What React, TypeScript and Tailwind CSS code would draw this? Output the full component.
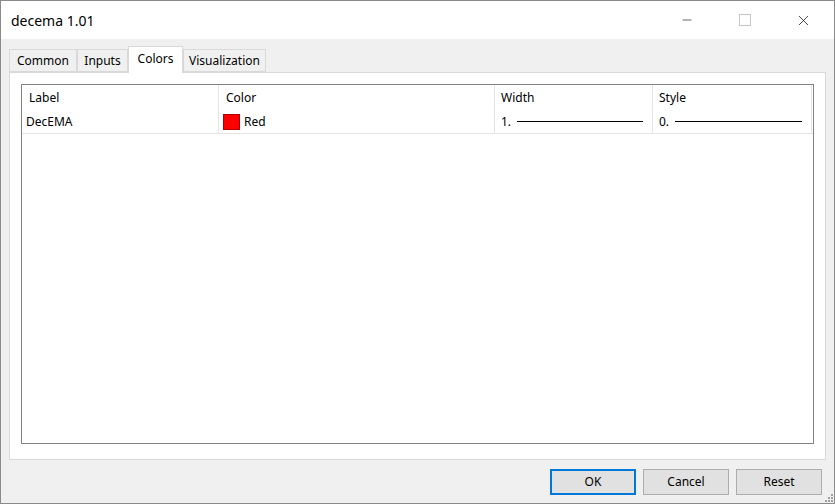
import { Minus, X } from "lucide-react";

const font = { fontFamily: '"Segoe UI", "Noto Sans", "Liberation Sans", sans-serif' };

type Tab = { name: string; active?: boolean; width: string };

const tabs: Tab[] = [
  { name: "Common", width: "w-[68px]" },
  { name: "Inputs", width: "w-[51px]" },
  { name: "Colors", width: "w-[55px]", active: true },
  { name: "Visualization", width: "w-[83px]" },
];

function TitleBar() {
  return (
    <div className="flex h-[38px] shrink-0 items-center bg-white">
      <span className="pl-[10px] text-[14px] text-black">decema 1.01</span>
      <div className="ml-auto flex h-full items-center pr-[8px]">
        <div className="flex h-full w-[46px] items-center justify-center">
          <Minus size={14} strokeWidth={1} className="text-black" />
        </div>
        <div className="ml-[12px] flex h-full w-[46px] items-center justify-center">
          <div className="h-[12px] w-[12px] border border-[#c7c7c7]" />
        </div>
        <div className="ml-[12px] flex h-full w-[46px] items-center justify-center">
          <X size={17} strokeWidth={1} className="text-black" />
        </div>
      </div>
    </div>
  );
}

function Tabs() {
  return (
    <div className="flex h-[26px] items-end pl-[8px]">
      {tabs.map((t) =>
        t.active ? (
          <div
            key={t.name}
            className={`${t.width} relative z-10 -mb-px flex h-[27px] items-center justify-center border border-b-0 border-[#d9d9d9] bg-white pb-[2px] text-[12px] text-black`}
          >
            {t.name}
          </div>
        ) : (
          <div
            key={t.name}
            className={`${t.width} flex h-[23px] items-center justify-center border border-[#d9d9d9] bg-[#f0f0f0] text-[12px] text-black`}
          >
            {t.name}
          </div>
        )
      )}
    </div>
  );
}

function LineSample({ value }: { value: string }) {
  return (
    <div className="flex h-full items-center pl-[6px] pr-[9px]">
      <span>{value}</span>
      <div className="ml-[6px] h-px flex-1 bg-black" />
    </div>
  );
}

function ColorList() {
  const cell = "border-r border-[#e5e5e5]";
  return (
    <div className="flex flex-1 flex-col border border-[#828282] bg-white text-[12px] text-black">
      <div className="grid h-[25px] grid-cols-[197px_276px_158px_159px]">
        <div className={`${cell} flex items-center pl-[7px]`}>Label</div>
        <div className={`${cell} flex items-center pl-[7px]`}>Color</div>
        <div className={`${cell} flex items-center pl-[6px]`}>Width</div>
        <div className={`${cell} flex items-center pl-[6px]`}>Style</div>
      </div>
      <div className="grid h-[24px] grid-cols-[197px_276px_158px_159px] border-b border-[#e5e5e5]">
        <div className={`${cell} flex items-center pl-[4px]`}>DecEMA</div>
        <div className={`${cell} flex items-center pl-[4px]`}>
          <div className="h-[16px] w-[17px] border border-[#b00000] bg-[#ff0000]" />
          <span className="ml-[4px]">Red</span>
        </div>
        <div className={cell}>
          <LineSample value="1." />
        </div>
        <div className={cell}>
          <LineSample value="0." />
        </div>
      </div>
    </div>
  );
}

function Button({ label, primary }: { label: string; primary?: boolean }) {
  return (
    <div
      className={`flex h-[26px] w-[86px] items-center justify-center bg-[#e1e1e1] text-[12px] text-black ${
        primary ? "border-2 border-[#0078d7]" : "border border-[#adadad]"
      }`}
    >
      {label}
    </div>
  );
}

export default function App() {
  return (
    <div
      className="relative flex h-[504px] w-[835px] flex-col overflow-hidden border border-[#8a8a8a] bg-[#f0f0f0]"
      style={font}
    >
      <TitleBar />
      <div className="flex flex-1 flex-col pt-[7px]">
        <Tabs />
        <div className="mx-[8px] flex h-[388px] flex-col border border-[#d9d9d9] bg-white px-[11px] pb-[15px] pt-[11px]">
          <ColorList />
        </div>
        <div className="flex justify-end gap-[7px] pr-[12px] pt-[9px]">
          <Button label="OK" primary />
          <Button label="Cancel" />
          <Button label="Reset" />
        </div>
      </div>
      <div className="pointer-events-none absolute bottom-[1px] right-[1px] grid grid-cols-3 gap-[1px]">
        {Array.from({ length: 9 }).map((_, i) => (
          <div
            key={i}
            className={`h-[2px] w-[2px] ${[0, 1, 3].includes(i) ? "bg-transparent" : "bg-[#a0a0a0]"}`}
          />
        ))}
      </div>
    </div>
  );
}
